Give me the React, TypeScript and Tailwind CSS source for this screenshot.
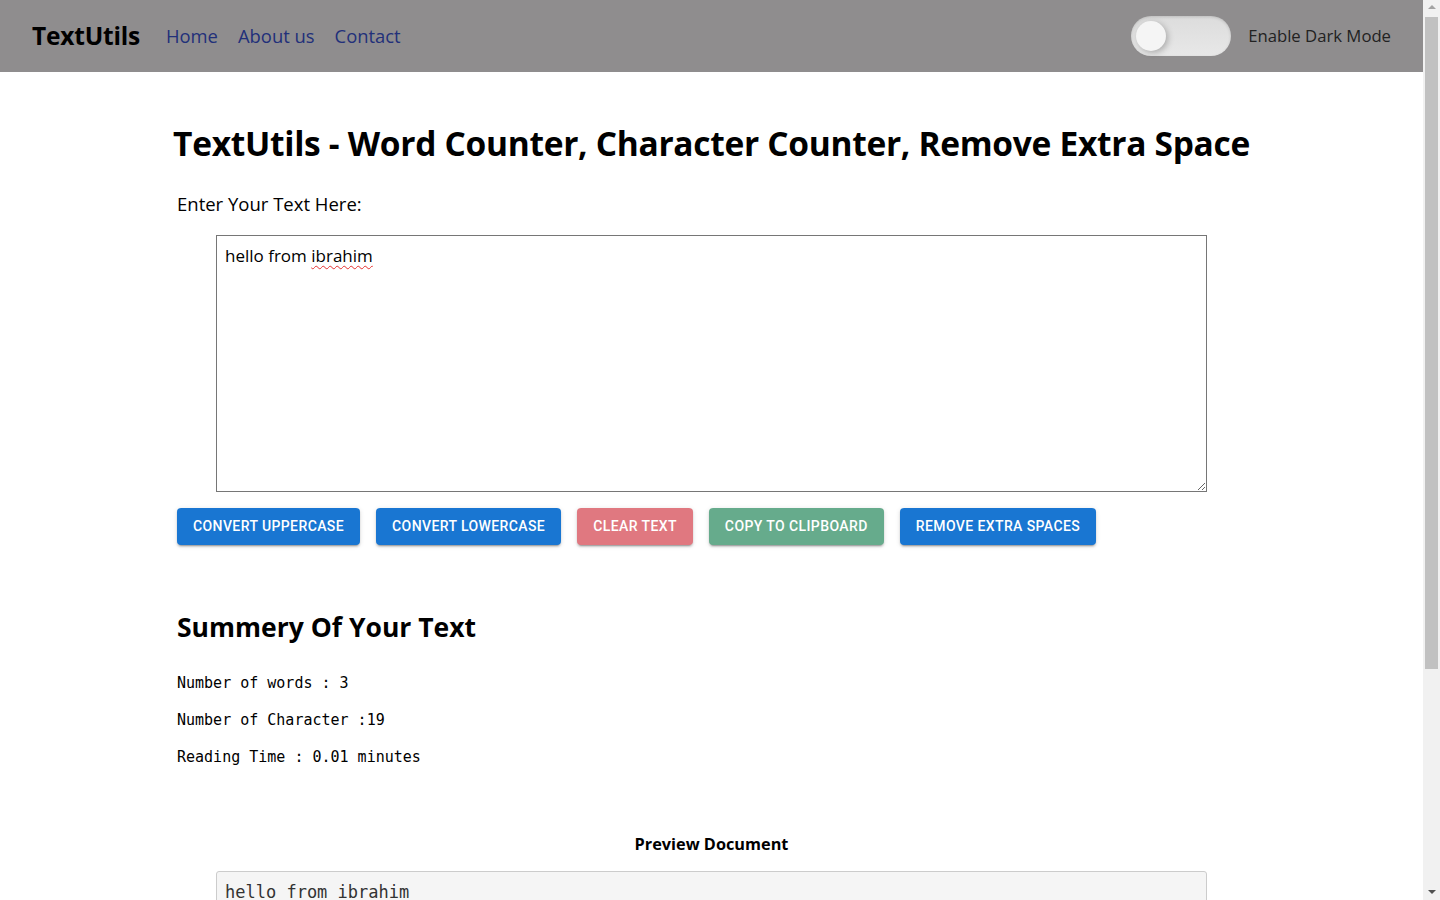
import { useState } from "react"

const BUTTONS = [
  { label: "Convert Uppercase", cls: "bg-[#1976d2]" },
  { label: "Convert Lowercase", cls: "bg-[#1976d2]" },
  { label: "Clear Text", cls: "bg-[#e07880]" },
  { label: "Copy to Clipboard", cls: "bg-[#66ab8c]" },
  { label: "Remove Extra Spaces", cls: "bg-[#1976d2]" },
]

export default function App() {
  const [text, setText] = useState("hello from ibrahim")

  const words = text.split(/\s+/).filter((w) => w.length > 0).length

  return (
    <div className="min-h-[1100px] bg-white font-['Open_Sans',sans-serif] text-black">
      <div className="mr-[17px]">
        {/* Navbar */}
        <nav className="flex h-[72px] items-center bg-[#8f8d8e] px-8">
          <span className="text-[24.5px] font-bold tracking-[-0.2px]">TextUtils</span>
          <ul className="ml-[26px] flex items-center gap-[20px] text-[18.4px] text-[#22307a]">
            <li>Home</li>
            <li>About us</li>
            <li>Contact</li>
          </ul>
          <div className="ml-auto flex items-center gap-[17px]">
            <div className="relative h-10 w-[100px] rounded-full bg-gradient-to-b from-[#dcdcdc] to-[#e8e8e8] shadow-[inset_0_1px_3px_rgba(0,0,0,0.15)]">
              <div className="absolute left-[5px] top-[5px] h-[30px] w-[30px] rounded-full bg-[#f5f5f5] shadow-[2px_2px_6px_rgba(0,0,0,0.25)]" />
            </div>
            <span className="text-[16.7px] text-[#222]">Enable Dark Mode</span>
          </div>
        </nav>

        {/* Main */}
        <main className="mx-auto w-[1069px]">
          <h1 className="-mx-10 mt-[46px] whitespace-nowrap text-center text-[33.5px] font-bold tracking-[-0.3px]">
            TextUtils - Word Counter, Character Counter, Remove Extra Space
          </h1>
          <label className="mt-[22px] block text-[18.5px]">Enter Your Text Here:</label>
          <div className="mt-[17px] flex justify-center">
            <div className="relative">
              <textarea
                value={text}
                onChange={(e) => setText(e.target.value)}
                spellCheck={false}
                className="block h-[257px] w-[991px] border border-[#767676] px-2 py-[8px] text-[17px] leading-[24px] outline-none"
              />
              {/* spell-check squiggle */}
              <div className="pointer-events-none absolute left-[9px] top-[9px] whitespace-pre text-[17px] leading-[24px] text-transparent">
                {"hello from "}
                <span className="underline decoration-[#e5312f] decoration-wavy decoration-1 underline-offset-[3px]">ibrahim</span>
              </div>
            </div>
          </div>

          <div className="mt-[16px] flex gap-4">
            {BUTTONS.map((b) => (
              <button
                key={b.label}
                className={`${b.cls} h-[37px] rounded-[4px] px-4 font-['Roboto',sans-serif] text-[14px] font-medium uppercase tracking-[0.4px] text-white shadow-[0_3px_1px_-2px_rgba(0,0,0,0.2),0_2px_2px_0_rgba(0,0,0,0.14),0_1px_5px_0_rgba(0,0,0,0.12)]`}
              >
                {b.label}
              </button>
            ))}
          </div>

          <h2 className="mt-[63px] text-[26.5px] font-bold">Summery Of Your Text</h2>
          <div className="mt-[25px] flex flex-col gap-[16px] font-['DejaVu_Sans_Mono',monospace] text-[15px] leading-[21px]">
            <p>Number of words : {words}</p>
            <p>Number of Character :19</p>
            <p>Reading Time : 0.01 minutes</p>
          </div>

          <h3 className="mt-[64px] text-center text-[16.3px] font-bold">Preview Document</h3>
          <div className="mt-[15px] flex justify-center">
            <pre className="w-[991px] rounded-[3px] border border-[#ccc] bg-[#f5f5f5] px-2 py-[8px] font-['DejaVu_Sans_Mono',monospace] text-[17px] text-[#333]">
              {text}
            </pre>
          </div>
        </main>
      </div>

      {/* browser scrollbar */}
      <div className="fixed right-0 top-0 flex h-screen w-[17px] flex-col items-center bg-[#f1f1f1]">
        <div className="mt-[5px] h-0 w-0 border-x-[4px] border-b-[4px] border-x-transparent border-b-[#a3a3a3]" />
        <div className="mt-[8px] h-[652px] w-[13px] bg-[#c1c1c1]" />
        <div className="mb-[6px] mt-auto h-0 w-0 border-x-[4px] border-t-[4px] border-x-transparent border-t-[#505050]" />
      </div>
    </div>
  )
}
